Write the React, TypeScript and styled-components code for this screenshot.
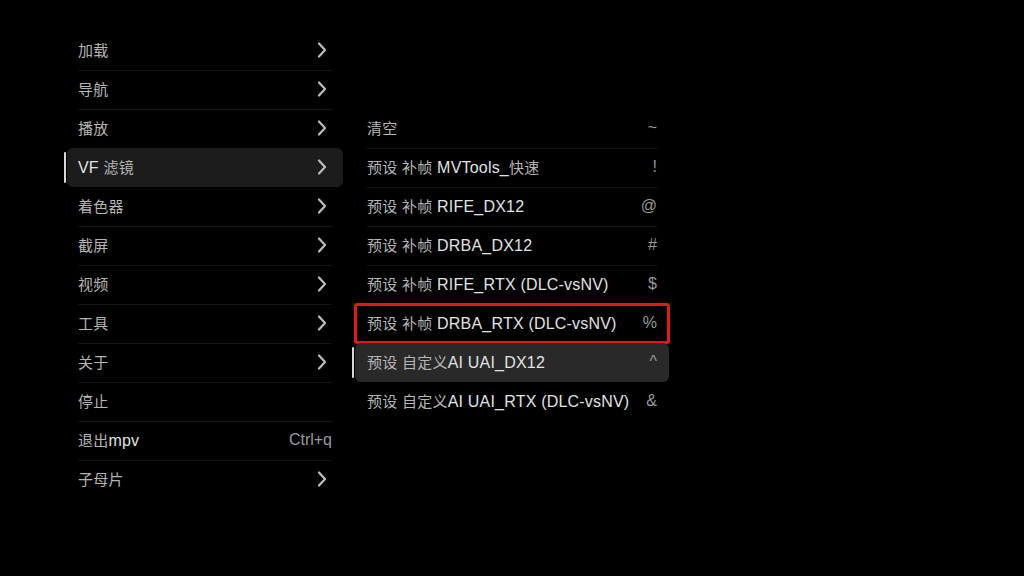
import * as React from 'react';
import styled, { createGlobalStyle, css } from 'styled-components';

const GlobalStyle = createGlobalStyle`
  html, body {
    margin: 0;
    padding: 0;
    background: #000;
  }
  body {
    font-family: "Liberation Sans", "Noto Sans CJK SC", sans-serif;
    font-size: 16px;
    color: #dcdcdc;
  }
`;

const Screen = styled.div`
  width: 1024px;
  height: 576px;
  display: flex;
  align-items: flex-start;
  gap: 12px;
  padding: 31px 0 0 67px;
  box-sizing: border-box;
  background: #000;
`;

const Menu = styled.div<{ $width: number; $top: number }>`
  width: ${p => p.$width}px;
  margin-top: ${p => p.$top}px;
  display: flex;
  flex-direction: column;
`;

const Row = styled.div<{ $active?: boolean; $tone?: string; $pad: number; $marked?: boolean }>`
  position: relative;
  height: 39px;
  padding: 0 ${p => p.$pad}px;
  border-radius: 6px;
  background: ${p => (p.$active ? p.$tone : 'transparent')};
  ${p =>
    p.$active &&
    css`
      &::before {
        content: '';
        position: absolute;
        left: -3px;
        top: 4px;
        bottom: 4px;
        width: 2px;
        border-radius: 1px;
        background: #d8d8d8;
      }
    `}
  ${p =>
    p.$marked &&
    css`
      border-radius: 2px;
      outline: 3px solid #e3151d;
      outline-offset: -2px;
    `}
`;

const RowInner = styled.div<{ $divider: boolean }>`
  height: 100%;
  box-sizing: border-box;
  padding-bottom: 3px;
  border-top: 1px solid ${p => (p.$divider ? '#141414' : 'transparent')};
  display: flex;
  align-items: center;
  justify-content: space-between;
`;

const Label = styled.span`
  white-space: nowrap;
  color: #e2e2e2;
  letter-spacing: 0.2px;
`;

const Cjk = styled.span`
  color: #b5b5b5;
  font-family: "Noto Sans CJK SC", sans-serif;
  font-size: 15px;
`;

const Hint = styled.span`
  color: #9a9a9a;
  font-size: 16px;
`;

const ChevronBox = styled.span`
  display: flex;
  margin-right: 5px;
`;

const Chevron = () => (
  <ChevronBox>
    <svg width="10" height="16" viewBox="0 0 10 16" fill="none">
      <polyline points="2,1.5 8,8 2,14.5" stroke="#bdbdbd" strokeWidth="2.2" strokeLinecap="round" strokeLinejoin="round" />
    </svg>
  </ChevronBox>
);

const Text = ({ children }: { children: string }) => {
  const parts = children.split(/([\u4e00-\u9fff]+)/).filter(Boolean);
  return (
    <Label>
      {parts.map((p, i) => (/[\u4e00-\u9fff]/.test(p) ? <Cjk key={i}>{p}</Cjk> : <React.Fragment key={i}>{p}</React.Fragment>))}
    </Label>
  );
};

type Item = { label: string; hint?: string; sub?: boolean };

const mainItems: Item[] = [
  { label: '加载', sub: true },
  { label: '导航', sub: true },
  { label: '播放', sub: true },
  { label: 'VF 滤镜', sub: true },
  { label: '着色器', sub: true },
  { label: '截屏', sub: true },
  { label: '视频', sub: true },
  { label: '工具', sub: true },
  { label: '关于', sub: true },
  { label: '停止' },
  { label: '退出mpv', hint: 'Ctrl+q' },
  { label: '子母片', sub: true },
];

const filterItems: Item[] = [
  { label: '清空', hint: '~' },
  { label: '预设 补帧 MVTools_快速', hint: '!' },
  { label: '预设 补帧 RIFE_DX12', hint: '@' },
  { label: '预设 补帧 DRBA_DX12', hint: '#' },
  { label: '预设 补帧 RIFE_RTX (DLC-vsNV)', hint: '$' },
  { label: '预设 补帧 DRBA_RTX (DLC-vsNV)', hint: '%' },
  { label: '预设 自定义AI UAI_DX12', hint: '^' },
  { label: '预设 自定义AI UAI_RTX (DLC-vsNV)', hint: '&' },
];

const MenuList = ({
  items,
  active,
  marked,
  tone,
  width,
  top,
  pad,
}: {
  items: Item[];
  active: number;
  marked?: number;
  tone: string;
  width: number;
  top: number;
  pad: number;
}) => (
  <Menu $width={width} $top={top}>
    {items.map((it, i) => {
      const divider = i > 0 && i !== active && i !== active + 1 && i !== marked;
      return (
        <Row key={it.label} $active={i === active} $tone={tone} $pad={pad} $marked={i === marked}>
          <RowInner $divider={divider}>
            <Text>{it.label}</Text>
            {it.sub ? <Chevron /> : it.hint ? <Hint>{it.hint}</Hint> : null}
          </RowInner>
        </Row>
      );
    })}
  </Menu>
);

const App = () => (
  <>
    <GlobalStyle />
    <Screen>
      <MenuList items={mainItems} active={3} tone="#1c1c1c" width={276} top={0} pad={11} />
      <MenuList items={filterItems} active={6} marked={5} tone="#292929" width={314} top={78} pad={12} />
    </Screen>
  </>
);

export default App;
